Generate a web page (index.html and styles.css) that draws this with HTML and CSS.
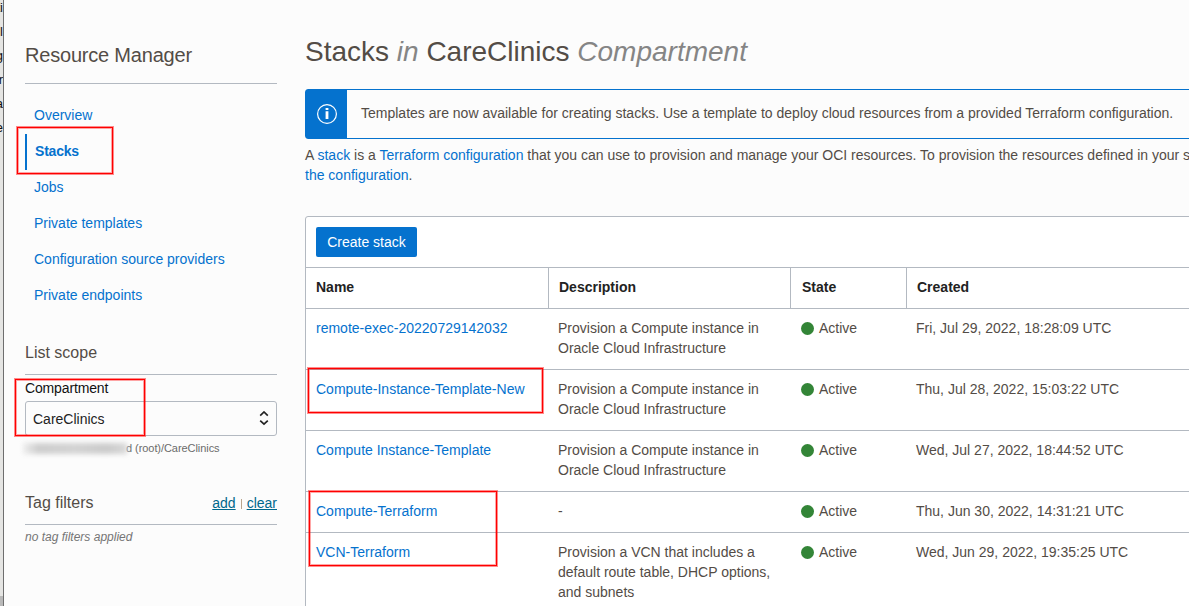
FILE: index.html
```
<!DOCTYPE html>
<html lang="en">
<head>
<meta charset="utf-8">
<title>Resource Manager - Stacks</title>
<link rel="stylesheet" href="styles.css">
</head>
<body>
<div class="app">
  <div class="edge" aria-hidden="true"><span>ti</span><span>il</span><span>g</span><span>r</span><span>a</span><span>e</span></div>
  <aside class="sidebar">
    <h2 class="side-title">Resource Manager</h2>
    <nav class="nav">
      <a>Overview</a>
      <a class="active"><span>Stacks</span></a>
      <a>Jobs</a>
      <a>Private templates</a>
      <a>Configuration source providers</a>
      <a>Private endpoints</a>
    </nav>
    <h3 class="section scope">List scope</h3>
    <div class="label">Compartment</div>
    <div class="select"><span>CareClinics</span>
      <svg width="10" height="16" viewBox="0 0 10 16" fill="none" stroke="#222" stroke-width="1.7"><path d="M1.2 4.6 5 1l3.8 3.6M1.2 9.6 5 13.2l3.8-3.6"/></svg>
    </div>
    <div class="path"><span class="redacted"></span><span class="path-text">d (root)/CareClinics</span></div>
    <div class="section tags"><h3>Tag filters</h3><div class="actions"><a>add</a><i></i><a>clear</a></div></div>
    <div class="empty">no tag filters applied</div>
  </aside>
  <main class="main">
    <h1><span>Stacks</span> <em>in</em> <span>CareClinics</span> <em>Compartment</em></h1>
    <div class="banner">
      <div class="banner-icon"><svg width="22" height="22" viewBox="0 0 22 22"><circle cx="11" cy="11" r="9.4" fill="none" stroke="#fff" stroke-width="1.2"/><path fill="#fff" d="M9.6 5h2.8v2H9.6zM9.6 8.2h2.8V16H9.6z"/></svg></div>
      <p class="banner-text">Templates are now available for creating stacks. Use a template to deploy cloud resources from a provided Terraform configuration.</p>
    </div>
    <p class="intro">A <a>stack</a> is a <a>Terraform configuration</a> that you can use to provision and manage your OCI resources. To provision the resources defined in your s<br><a>the configuration</a>.</p>
    <section class="panel">
      <div class="toolbar"><button class="create">Create stack</button></div>
      <div class="row head"><div>Name</div><div>Description</div><div class="state-head">State</div><div>Created</div></div>
      <div class="row"><div><a>remote-exec-20220729142032</a></div><div>Provision a Compute instance in<br>Oracle Cloud Infrastructure</div><div class="state">Active</div><div>Fri, Jul 29, 2022, 18:28:09 UTC</div></div>
      <div class="row"><div><a>Compute-Instance-Template-New</a></div><div>Provision a Compute instance in<br>Oracle Cloud Infrastructure</div><div class="state">Active</div><div>Thu, Jul 28, 2022, 15:03:22 UTC</div></div>
      <div class="row"><div><a>Compute Instance-Template</a></div><div>Provision a Compute instance in<br>Oracle Cloud Infrastructure</div><div class="state">Active</div><div>Wed, Jul 27, 2022, 18:44:52 UTC</div></div>
      <div class="row"><div><a>Compute-Terraform</a></div><div>-</div><div class="state">Active</div><div>Thu, Jun 30, 2022, 14:31:21 UTC</div></div>
      <div class="row"><div><a>VCN-Terraform</a></div><div>Provision a VCN that includes a<br>default route table, DHCP options,<br>and subnets</div><div class="state">Active</div><div>Wed, Jun 29, 2022, 19:35:25 UTC</div></div>
    </section>
  </main>
  <div class="mark mark-stacks"></div>
  <div class="mark mark-compartment"></div>
  <div class="mark mark-template"></div>
  <div class="mark mark-terraform"></div>
</div>
</body>
</html>
```
FILE: styles.css
```
* { box-sizing: border-box; }
body { margin: 0; overflow: hidden; background: #fcfcfc; font: 14px/20px "Liberation Sans", Arial, sans-serif; color: #534c46; }
h1, h2, h3, p { margin: 0; font-weight: normal; }
a { color: #0572ce; }
.app { position: relative; display: flex; height: 606px; overflow: hidden; }

/* Sliver of the window behind, visible at the left edge */
.edge { width: 4px; flex: none; display: flex; flex-direction: column; align-items: flex-end; overflow: hidden; background: linear-gradient(#e5e5e3 0 596px, #b9b9b9 596px); border-right: 1px solid #6e6e6e; color: #111; font-size: 13px; line-height: 24px; }
.edge span { height: 24px; margin-top: -4px; margin-bottom: 4px; }

.sidebar { width: 273px; flex: none; padding-left: 21px; }
.side-title { height: 84px; padding-top: 43px; border-bottom: 1px solid #b3b9c1; font-size: 20px; line-height: 24px; letter-spacing: -0.2px; }
.nav { display: flex; flex-direction: column; padding-top: 13px; }
.nav a { height: 36px; padding-left: 9px; line-height: 36px; }
.nav .active { padding: 1px 0 0; font-weight: bold; letter-spacing: -0.2px; }
.active span { display: block; height: 36px; padding-left: 8px; border-left: 2px solid #0572ce; line-height: 34px; }
.section { border-bottom: 1px solid #b3b9c1; font-size: 16px; line-height: 20px; }
.scope { margin-top: 29px; height: 33px; padding-top: 1px; }
.label { height: 26px; padding-top: 3px; color: #111; letter-spacing: -0.15px; }
.select { height: 35px; display: flex; align-items: center; justify-content: space-between; padding: 0 7px; border: 1px solid #b3b9c1; border-radius: 3px; color: #222; }
.path { display: flex; height: 24px; padding-top: 3px; font-size: 11px; line-height: 18px; letter-spacing: -0.06px; color: #6b6b6b; }
.redacted { width: 104px; height: 11px; margin: 4px 0 0 -2px; background: linear-gradient(90deg, #eee, #cdcdcd 15%, #d3d3d3 50%, #cacaca 80%, #d8d8d8); filter: blur(2.5px); }
.path-text { margin-left: -1px; }
.tags { display: flex; justify-content: space-between; height: 33px; margin-top: 32px; }
.tags h3 { padding-top: 1px; font-size: 16px; }
.actions { display: flex; align-items: flex-start; font-size: 14px; line-height: 22px; }
.actions a { color: #00688c; text-decoration: underline; }
.actions i { width: 1px; height: 10px; margin: 7px 5px 0; background: #b9a58e; }
.empty { padding-top: 2px; font-size: 12px; font-style: italic; color: #757575; }

.main { flex: 1; min-width: 0; padding-left: 28px; }
h1 { height: 89px; padding-top: 36px; font-size: 28px; line-height: 32px; white-space: nowrap; }
h1 em { color: #858585; }
.banner { display: flex; width: 900px; height: 50px; border: 1px solid #0572ce; border-radius: 3px; }
.banner-icon { width: 41px; display: flex; align-items: center; justify-content: center; background: #0572ce; }
.banner-text { padding: 13px 14px; white-space: nowrap; }
.intro { height: 77px; padding-top: 6px; white-space: nowrap; }
.panel { width: 900px; height: 400px; border: 1px solid #b3b9c1; border-radius: 3px; background: #fff; }
.toolbar { height: 50px; padding: 10px; }
.create { display: block; width: 101px; height: 30px; padding: 0; border: 0; border-radius: 2px; background: #0572ce; color: #fff; font: inherit; }
.row { display: grid; grid-template-columns: 242px 242px 116px 1fr; border-top: 1px solid #b3b9c1; }
.row > div { padding: 9px 10px 11px; white-space: nowrap; }
.head { font-weight: bold; color: #222; }
.head > div + div { border-left: 1px solid #b3b9c1; }
.row > .state-head { padding-left: 11px; }
.state { display: flex; gap: 5px; }
.state::before { content: ""; width: 13px; height: 13px; margin: 4px 0 0 1px; border-radius: 50%; background: #338537; }

/* Annotation frames laid over the page */
.mark { position: absolute; border: 1px solid #f00; box-shadow: 0 0 0 1px rgba(255, 0, 0, .45), inset 0 0 0 1px rgba(255, 0, 0, .35); }
.mark-stacks { left: 17px; top: 127px; width: 96px; height: 47px; }
.mark-compartment { left: 15px; top: 379px; width: 130px; height: 57px; }
.mark-template { left: 308px; top: 368px; width: 235px; height: 45px; }
.mark-terraform { left: 309px; top: 491px; width: 188px; height: 75px; }
```
